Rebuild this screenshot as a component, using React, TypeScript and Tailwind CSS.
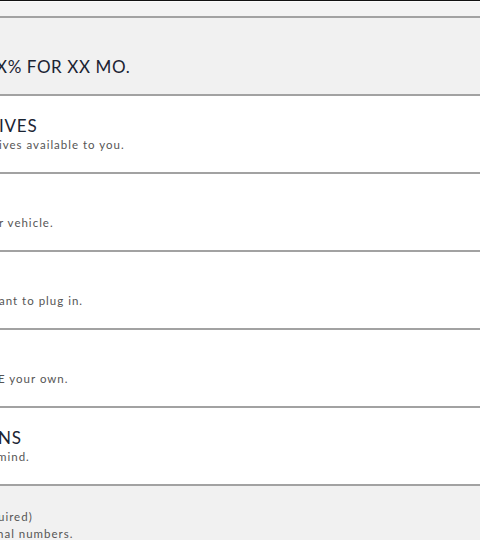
const rows = [
  { title: 'IVES', titleShift: '-ml-[1px]', sub: 'ives available to you.', subShift: '-ml-[1px]' },
  { title: '', titleShift: '', sub: 'r vehicle.', subShift: '-ml-[1px]' },
  { title: '', titleShift: '', sub: 'ant to plug in.', subShift: '-ml-[1px]' },
  { title: '', titleShift: '', sub: 'E your own.', subShift: '-ml-[2px]' },
  { title: 'NS', titleShift: '-ml-[2px]', sub: 'mind.', subShift: '-ml-[3px]' },
];

const App = () => {
  return (
    <div className="w-[480px] h-[540px] overflow-hidden bg-white font-['Lato',sans-serif]">
      {/* top strip */}
      <div className="h-px bg-[#111]" />
      <div className="h-[15px] bg-[#f3f3f3] border-t border-[#fafafa]" />

      {/* offer band */}
      <div className="h-[78px] bg-[#f1f1f1] border-t-2 border-[#a2a2a2] pt-[39px]">
        <p className="-ml-[4px] text-[17px] leading-[20px] tracking-[0.6px] text-[#1b2433] whitespace-nowrap">
          X% FOR XX MO.
        </p>
      </div>

      {rows.map((r, i) => (
        <div key={i} className="h-[78px] border-t-2 border-[#a2a2a2] pt-[20px] bg-white">
          <p className={`${r.titleShift} h-[20px] text-[17px] leading-[20px] tracking-[0.8px] text-[#1b2433] whitespace-nowrap`}>
            {r.title}
          </p>
          <p className={`${r.subShift} mt-px text-[11.5px] leading-[16px] tracking-[1px] text-[#555] whitespace-nowrap`}>
            {r.sub}
          </p>
        </div>
      ))}

      {/* disclaimer band */}
      <div className="h-[60px] bg-[#f1f1f1] border-t-2 border-[#a2a2a2] pt-[22px]">
        <p className="-ml-[2px] text-[11.5px] leading-[17px] tracking-[1px] text-[#555] whitespace-nowrap">uired)</p>
        <p className="-ml-[3px] text-[11.5px] leading-[17px] tracking-[1px] text-[#555] whitespace-nowrap">nal numbers.</p>
      </div>
    </div>
  );
};

export default App;
